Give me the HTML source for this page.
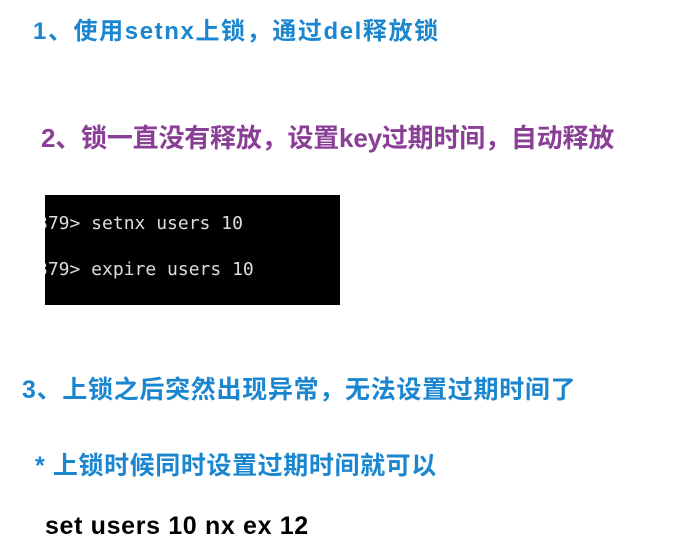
<!DOCTYPE html>
<html><head><meta charset="utf-8"><style>
body{margin:0;width:691px;height:556px;background:#fff;position:relative;overflow:hidden;font-family:"Liberation Sans","Noto Sans CJK SC",sans-serif;font-weight:bold}
.t{position:absolute;white-space:nowrap;line-height:1}
.term{position:absolute;left:45px;top:195px;width:295px;height:110px;background:#000;overflow:hidden}
.term div{position:absolute;left:-8px;color:#ddd;font:18px "DejaVu Sans Mono","Liberation Mono",monospace;white-space:pre}
</style></head><body>
<div class="t" style="left:33px;top:20px;font-size:24px;color:#1a86d0;letter-spacing:1.6px">1、使用setnx上锁，通过del释放锁</div>
<div class="t" style="left:41px;top:125px;font-size:26px;color:#8a3f96;letter-spacing:-0.2px">2、锁一直没有释放，设置key过期时间，自动释放</div>
<div class="term"><div style="top:18px">379&gt; setnx users 10</div><div style="top:64px">379&gt; expire users 10</div></div>
<div class="t" style="left:22px;top:378px;font-size:25px;color:#1a86d0;letter-spacing:0.7px">3、上锁之后突然出现异常，无法设置过期时间了</div>
<div class="t" style="left:35px;top:454px;font-size:25px;color:#1a86d0;letter-spacing:0.6px">* 上锁时候同时设置过期时间就可以</div>
<div class="t" style="left:45px;top:514px;font-size:25px;color:#000;letter-spacing:0.65px">set users 10 nx ex 12</div>
</body></html>
